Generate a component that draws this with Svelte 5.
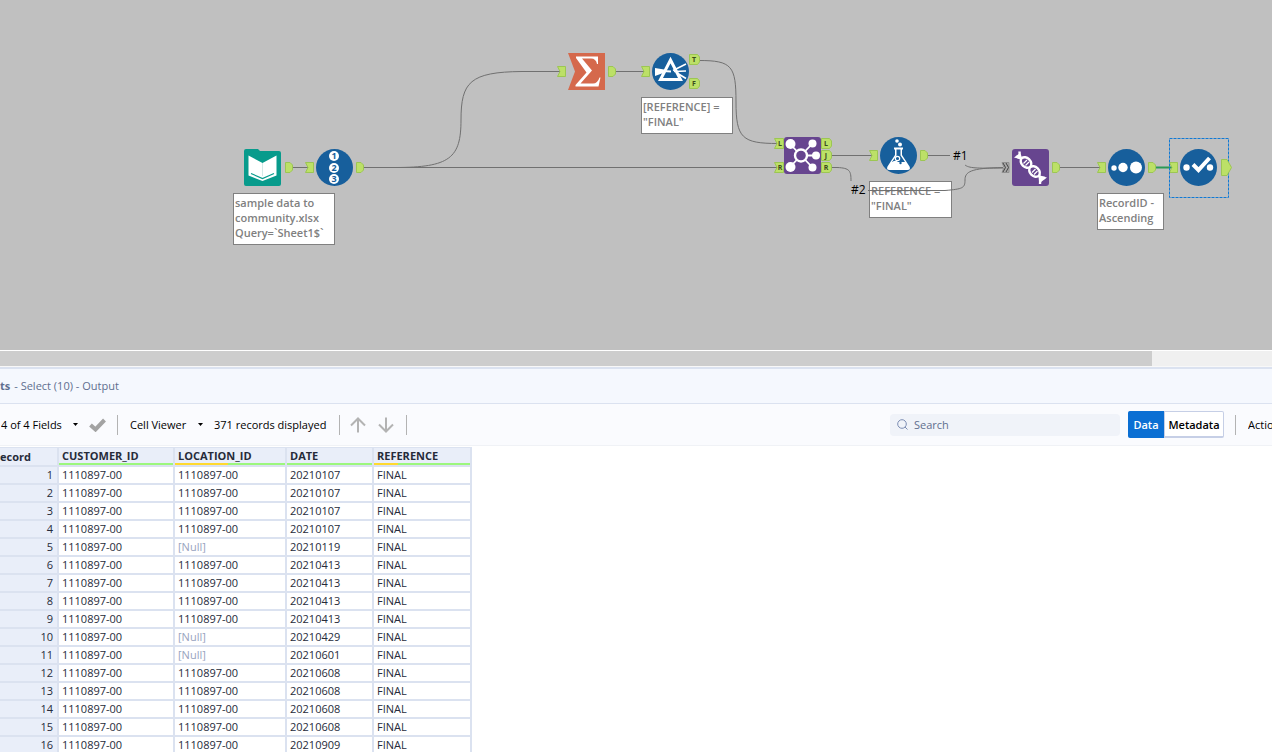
<script>
  const nodes = [
    { type: 'input', x: 244, y: 149 },
    { type: 'recordid', x: 316, y: 149 },
    { type: 'summarize', x: 568, y: 53 },
    { type: 'filter', x: 652, y: 53 },
    { type: 'join', x: 784, y: 137 },
    { type: 'formula', x: 880, y: 137 },
    { type: 'union', x: 1012, y: 149 },
    { type: 'sort', x: 1108, y: 149 },
    { type: 'select', x: 1180, y: 149 }
  ];

  const captions = [
    { x: 233, y: 193, w: 102, lines: ['sample data to', 'community.xlsx', 'Query=`Sheet1$`'] },
    { x: 641, y: 97, w: 92, lines: ['[REFERENCE] =', '"FINAL"'] },
    { x: 869, y: 181, w: 83, lines: ['REFERENCE =', '"FINAL"'] },
    { x: 1097, y: 193, w: 67, lines: ['RecordID -', 'Ascending'] }
  ];

  const wires = [
    'M291 167.5H308',
    'M362 167.5H778',
    'M362 167.5H395C450 167.5 461 158 461 120S470 72 522 71.500H561',
    'M615 71.500H645',
    'M699 60.500C732 60.500 736 66 736 102S742 143.500 778 143.500',
    'M831 155.500H873',
    'M831 167.500H837C850 168 851 171 851 181',
    'M928 155.500H950',
    'M965 165C969 168 975 168.500 1003 168',
    'M868 190.500H945C963 189 965 188 965 180S970 168 1003 167.500',
    'M1059 167.500H1101'
  ];

  // plain anchors
  const inputs = [[305, 162], [557, 66], [641, 66], [869, 150], [1097, 162], [1169, 162]];
  const outputs = [[285, 162], [356, 162], [608, 66], [920, 150], [1052, 162], [1148, 162]];

  // anchors with a letter
  const labelled = [
    { x: 774, y: 138, text: 'L', dir: 'in' },
    { x: 774, y: 162, text: 'R', dir: 'in' },
    { x: 689, y: 54, text: 'T', dir: 'out' },
    { x: 689, y: 78, text: 'F', dir: 'out' },
    { x: 821, y: 138, text: 'L', dir: 'out' },
    { x: 821, y: 150, text: 'J', dir: 'out' },
    { x: 821, y: 162, text: 'R', dir: 'out' }
  ];

  const columns = [
    { name: 'CUSTOMER_ID', empty: 0 },
    { name: 'LOCATION_ID', empty: 48 },
    { name: 'DATE', empty: 0 },
    { name: 'REFERENCE', empty: 25 }
  ];

  const dates = [
    '20210107', '20210107', '20210107', '20210107', '20210119', '20210413', '20210413', '20210413',
    '20210413', '20210429', '20210601', '20210608', '20210608', '20210608', '20210608', '20210909'
  ];
  const nulls = [5, 10, 11];
  const rows = dates.map((date, i) => ({
    id: i + 1,
    customer: '1110897-00',
    location: nulls.includes(i + 1) ? null : '1110897-00',
    date,
    reference: 'FINAL'
  }));

  let view = $state('data');
  let search = $state('');
</script>

<main>
  <section class="canvas" aria-label="Workflow">
    {#each captions as c}
      <div class="caption" style="left: {c.x}px; top: {c.y}px; width: {c.w}px">
        {#each c.lines as line}<div>{line}</div>{/each}
      </div>
    {/each}

    <svg class="wires" width="1272" height="350">
      {#each wires as d}<path {d} />{/each}
      <path class="active" d="M1155 167.500H1173" />
      {#each inputs as [x, y]}
        <path class="anchor" transform="translate({x} {y})" d="M.5 .5H8.500V10.500H.5L3 5.500Z" />
      {/each}
      {#each outputs as [x, y]}
        <path class="anchor" transform="translate({x} {y})" d="M.5 .5H5L7.500 3V8L5 10.500H.5Z" />
      {/each}
      <rect class="selection" x="1169.5" y="138.5" width="59" height="59" />
      <path class="anchor" d="M1221.500 159.500H1227L1231.500 167.500L1227 175.500H1221.500Z" />
      {#each labelled as a}
        <g transform="translate({a.x} {a.y})">
          {#if a.dir === 'in'}
            <path class="anchor" d="M.5 .5H9.500V10.500H.5L3 5.500Z" />
            <text x="6" y="8">{a.text}</text>
          {:else}
            <path class="anchor" d="M.5 .5H8.500L10.500 3V8L8.500 10.500H.5Z" />
            <text x="5" y="8">{a.text}</text>
          {/if}
        </g>
      {/each}
      <g transform="translate(1002 162)">
        <path class="multi" d="M0 .5H7V10.500H0L2 5.500Z" />
        <path class="chevrons" d="M1 1L3.500 5.500L1 10M4 1L6.500 5.500L4 10" />
      </g>
    </svg>

    <span class="order first">#1</span>
    <span class="order second">#2</span>

    {#each nodes as n}
      <svg class="node" style="left: {n.x}px; top: {n.y}px" width="37" height="37" viewBox="0 0 37 37">
        {#if n.type === 'input'}
          <path d="M2 0H14L16 2H35Q37 2 37 4V35Q37 37 35 37H2Q0 37 0 35V2Q0 0 2 0Z" fill="#089b8c" />
          <path d="M4.500 6.500L18.500 14L32.500 6.500V26.500L18.500 32L4.500 26.500Z" fill="#fff" />
          <path d="M18.500 14V27" stroke="#c8e5e1" stroke-width=".8" />
          <path d="M7 24.500L18.500 29.500L30 24.500" fill="none" stroke="#089b8c" stroke-width="1.2" />
        {:else if n.type === 'summarize'}
          <path d="M0 0H37V37H0L7 18.500Z" fill="#d5694c" />
          <path d="M8 3.500H30V11H29Q28 5.500 23 5.500H14L24 17.500L12.500 30.500H25Q29.500 30.500 31.500 24.500H32.500L30.500 33.500H7.500V32L18.500 19.500L8 5Z" fill="#fff" />
        {:else if n.type === 'join'}
          <rect width="37" height="37" rx="3" fill="#67458f" />
          <path d="M6 7L17 18.500L6 30M28.500 6.500L17 18.500L28.500 30.500M17 18.500H32" stroke="#fff" stroke-width="1.8" fill="none" />
          <circle cx="17" cy="18.500" r="6" fill="#67458f" stroke="#fff" stroke-width="2.4" />
          <g fill="#fff">
            <circle cx="6.500" cy="7" r="5" /><circle cx="6.500" cy="30" r="5" />
            <circle cx="28.500" cy="6.500" r="4" /><circle cx="32" cy="18.500" r="4" /><circle cx="28.500" cy="30.500" r="4" />
          </g>
        {:else if n.type === 'union'}
          <rect width="37" height="37" rx="3" fill="#67458f" />
          <g fill="none" stroke="#fff" stroke-width="2.4">
            <ellipse cx="14" cy="13.500" rx="6" ry="4.500" transform="rotate(45 14 13.500)" />
            <ellipse cx="22.500" cy="22.500" rx="6" ry="4.500" transform="rotate(45 22.500 22.500)" />
            <path d="M10 10Q7.500 8 7.500 2.500M10 9.500Q7 9 4 7.500M27 26.500Q28.500 29 28 35M27 27Q29.500 28.500 33 29" />
            <path d="M11.500 14.500L15 11M13.500 16.500L17 13M20 23.500L23.500 20M22 25.500L25.500 22" stroke-width="1.2" />
          </g>
          <path d="M2 8.500L8 4V10ZM35 28.500L29 33V27Z" fill="#fff" />
        {:else}
          <circle cx="18.500" cy="18.500" r="18.500" fill="#175f9c" />
          {#if n.type === 'recordid'}
            {#each [7, 19, 30] as cy, i}
              <circle cx="18" {cy} r="5" fill="#fff" />
              <text class="digit" x="18" y={cy + 3}>{i + 1}</text>
            {/each}
          {:else if n.type === 'filter'}
            <path d="M3 15L18 17.500L3 23Z" fill="#fff" />
            <path d="M18.500 7L28.500 26.500H8.500Z" fill="#175f9c" stroke="#fff" stroke-width="3" />
            <path d="M3 17.500L19 18.500" stroke="#fff" stroke-width="2" />
            <path d="M21 17.500L34 11M22 18.500L34 18M25 20L34 25.500" stroke="#fff" stroke-width="1.6" />
          {:else if n.type === 'formula'}
            <path d="M14 10.500H23V12.500H22V18L29.500 29.500Q31 33 27.500 33H9.500Q6 33 7.500 29.500L15 18V12.500H14Z" fill="#fff" />
            <circle cx="17" cy="4" r="1.800" fill="#fff" /><circle cx="20" cy="7.500" r="2" fill="#fff" />
            <path d="M16.500 12.500V18.500L12 25H25L20.500 18.500V12.500Z" fill="#175f9c" />
            <path d="M11 26Q15 22 18 25T26 26Z" fill="#fff" />
            <circle cx="17.500" cy="21.500" r="2.200" fill="#175f9c" stroke="#fff" stroke-width="1.200" />
            <circle cx="20.500" cy="26" r="1.200" fill="#175f9c" />
          {:else if n.type === 'sort'}
            <g fill="#fff">
              <circle cx="6" cy="19" r="2.700" /><circle cx="15" cy="18.500" r="4.700" /><circle cx="28" cy="18.500" r="6" />
            </g>
          {:else}
            <circle cx="6.500" cy="18.500" r="3.200" fill="#fff" /><circle cx="30" cy="18.500" r="3.200" fill="#fff" />
            <path d="M13 15.500L18.500 21L29.500 9" fill="none" stroke="#fff" stroke-width="4" />
          {/if}
        {/if}
      </svg>
    {/each}
  </section>

  <div class="scrollbar"><div class="thumb"></div></div>

  <header><b>ts</b><span>- Select (10) - Output</span></header>

  <div class="toolbar">
    <div class="dropdown fields">
      <select aria-label="Fields"><option>4 of 4 Fields</option></select>
      <svg width="5" height="3"><path d="M0 0H5L2.500 3Z" /></svg>
    </div>
    <button class="icon" aria-label="Apply">
      <svg width="17" height="14"><path d="M1.500 7L6.500 11.500L15.500 2" fill="none" stroke="#a3a3a3" stroke-width="4" /></svg>
    </button>
    <i class="divider"></i>
    <div class="dropdown viewer">
      <select aria-label="Viewer"><option>Cell Viewer</option></select>
      <svg width="5" height="3"><path d="M0 0H5L2.500 3Z" /></svg>
    </div>
    <span class="count">371 records displayed</span>
    <i class="divider"></i>
    <div class="arrows">
      <button class="icon" aria-label="Previous">
        <svg width="16" height="16"><path d="M8 15.500V2M1 8.500L8 1.500L15 8.500" fill="none" stroke="#b3b3b3" stroke-width="2" /></svg>
      </button>
      <button class="icon" aria-label="Next">
        <svg width="16" height="16"><path d="M8 .5V14M1 7.500L8 14.500L15 7.500" fill="none" stroke="#b3b3b3" stroke-width="2" /></svg>
      </button>
    </div>
    <i class="divider"></i>

    <label class="search">
      <svg width="11" height="11"><circle cx="5" cy="5" r="4.300" /><path d="M8 8L10.500 10.500" /></svg>
      <input type="text" placeholder="Search" aria-label="Search" bind:value={search} />
    </label>
    <div class="toggle">
      <button class:on={view === 'data'} onclick={() => (view = 'data')}>Data</button>
      <button class:on={view === 'metadata'} onclick={() => (view = 'metadata')}>Metadata</button>
    </div>
    <i class="divider"></i>
    <button class="actions">Actions</button>
  </div>

  <div class="results">
    <table>
      <colgroup>
        <col class="c-record" /><col class="c-customer" /><col class="c-location" /><col class="c-date" /><col class="c-reference" />
      </colgroup>
      <thead>
        <tr>
          <th class="record">ecord</th>
          {#each columns as col}
            <th>
              {col.name}
              <div class="quality"><div style="width: {col.empty}%"></div></div>
            </th>
          {/each}
        </tr>
      </thead>
      <tbody>
        {#each rows as row}
          <tr>
            <th scope="row">{row.id}</th>
            <td>{row.customer}</td>
            <td class:null={row.location === null}>{row.location ?? '[Null]'}</td>
            <td>{row.date}</td>
            <td>{row.reference}</td>
          </tr>
        {/each}
      </tbody>
    </table>
  </div>
</main>

<style>
  :global(body) {
    background: #fff;
    font-family: "Open Sans", "Noto Sans", sans-serif;
    font-size: 11px;
  }

  main {
    display: flex;
    flex-direction: column;
    height: 100vh;
    overflow: hidden;
  }

  button, select, input {
    font: inherit;
    border: 0;
    padding: 0;
    margin: 0;
    background: none;
    color: inherit;
  }

  /* workflow canvas */
  .canvas {
    position: relative;
    flex: none;
    height: 350px;
    overflow: hidden;
    background: #c0c0c0;
  }

  .wires {
    position: absolute;
    left: 0;
    top: 0;
  }

  .wires path {
    fill: none;
    stroke: #707070;
  }

  .wires .active {
    stroke: #2a9a55;
    stroke-width: 2;
  }

  .wires .anchor {
    fill: #bce067;
    stroke: #9cc653;
  }

  .wires .multi {
    fill: #aaa;
    stroke: #909090;
  }

  .wires .chevrons {
    stroke: #444;
  }

  .wires text {
    font-size: 7px;
    font-weight: bold;
    text-anchor: middle;
    fill: #3b4a1c;
  }

  .selection {
    fill: none;
    stroke: #1079d4;
    stroke-dasharray: 3 1;
  }

  .node {
    position: absolute;
  }

  .digit {
    font-size: 9px;
    font-weight: bold;
    text-anchor: middle;
    fill: #175f9c;
  }

  .caption {
    position: absolute;
    box-sizing: border-box;
    padding: 1px 1px 4px;
    border: 1px solid #808080;
    background: #fff;
    color: #808080;
    font-weight: 600;
    line-height: 15px;
    white-space: nowrap;
  }

  .order {
    position: absolute;
    font-size: 12px;
    line-height: 16px;
    color: #000;
  }

  .first {
    left: 953px;
    top: 148px;
  }

  .second {
    left: 851px;
    top: 182px;
  }

  .scrollbar {
    flex: none;
    height: 15px;
    border-top: 1px solid #fff;
    border-bottom: 1px solid #f8f8f8;
    background: #f0f0f0;
  }

  .thumb {
    width: calc(100% - 120px);
    height: 15px;
    background: #cdcdcd;
  }

  header {
    display: flex;
    flex: none;
    align-items: center;
    gap: 4px;
    box-sizing: border-box;
    height: 37px;
    padding-bottom: 2px;
    border-top: 2px solid #dbe2f0;
    border-bottom: 1px solid #dbe2f0;
    background: #f5f8fe;
    color: #5f6f8f;
  }

  /* toolbar */
  .toolbar {
    display: flex;
    flex: none;
    align-items: center;
    height: 41px;
    border-bottom: 1px solid #f0f2f6;
    background: #fafbfe;
    color: #000;
    white-space: nowrap;
  }

  .dropdown {
    display: grid;
    align-items: center;
  }

  .dropdown > * {
    grid-area: 1 / 1;
  }

  .dropdown select {
    appearance: none;
  }

  .dropdown svg {
    justify-self: end;
    pointer-events: none;
  }

  .fields {
    width: 77px;
    margin: 0 11px 0 1px;
  }

  .viewer {
    width: 73px;
    margin: 0 11px 0 12px;
  }

  .count {
    width: 125px;
  }

  .icon {
    display: flex;
  }

  .icon + .divider {
    margin-left: 11px;
  }

  .arrows {
    display: flex;
    gap: 12px;
    margin: 0 12px 0 10px;
  }

  .divider {
    flex: none;
    width: 1px;
    height: 20px;
    background: #b3b3b3;
  }

  .search {
    display: flex;
    align-items: center;
    gap: 6px;
    box-sizing: border-box;
    width: 230px;
    height: 22px;
    margin-left: auto;
    padding: 0 7px;
    border-radius: 4px;
    background: #f0f3f9;
  }

  .search svg {
    flex: none;
    fill: none;
    stroke: #7c8db3;
  }

  .search input {
    flex: 1;
    min-width: 0;
    outline: 0;
  }

  .search input::placeholder {
    color: #5f6f8f;
  }

  .toggle {
    display: flex;
    height: 27px;
    margin: 0 11px 0 8px;
  }

  .toggle button {
    box-sizing: border-box;
    width: 60px;
    border: 1px solid #c6cfe6;
    border-bottom-width: 2px;
    border-radius: 0 2px 2px 0;
    background: #fff;
    font-weight: 600;
  }

  .toggle button:first-child {
    width: 36px;
    border-radius: 2px 0 0 2px;
  }

  .toggle .on {
    border-color: #0b6fd3;
    background: #0b6fd3;
    color: #fff;
  }

  .actions {
    width: 24px;
    margin-left: 12px;
    overflow: hidden;
    text-align: left;
  }

  /* results grid */
  .results {
    flex: 1;
    min-height: 0;
    padding-top: 1px;
    overflow: hidden;
  }

  table {
    width: 472px;
    table-layout: fixed;
    border-collapse: separate;
    border-spacing: 0;
    border-top: 1px solid #dbe2f0;
    color: #262b3a;
    line-height: 16px;
  }

  .c-record { width: 59px; }
  .c-customer { width: 116px; }
  .c-location { width: 112px; }
  .c-date { width: 87px; }
  .c-reference { width: 98px; }

  th, td {
    height: 16px;
    padding: 0 3px;
    border-right: 2px solid #dbe2f0;
    border-bottom: 2px solid #dbe2f0;
    text-align: left;
    white-space: nowrap;
  }

  th {
    background: #e9eef9;
  }

  tbody th {
    padding-right: 4px;
    font-weight: normal;
    text-align: right;
  }

  .record {
    padding-left: 0;
  }

  .quality {
    height: 2px;
    margin: -1px -3px 0;
    background: #9cf77d;
  }

  .quality div {
    height: 2px;
    background: #ffd92e;
  }

  .null {
    color: #98a3be;
  }
</style>
